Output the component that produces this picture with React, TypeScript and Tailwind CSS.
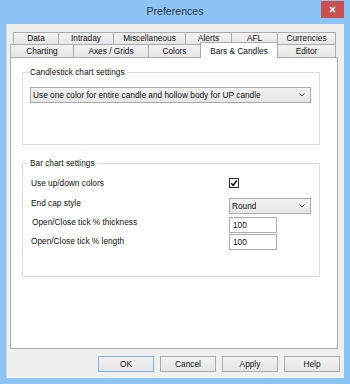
import React from "react";

const font = "font-['Liberation_Sans',Arial,sans-serif]";

function Chevron() {
	return (
		<svg width="6" height="4" viewBox="0 0 6 4" className="shrink-0">
			<polyline points="0.5,0.5 3,3 5.5,0.5" fill="none" stroke="#444" strokeWidth="1" />
		</svg>
	);
}

function Dropdown({ value, width }: { value: string; width: string }) {
	return (
		<div
			className={`${width} h-[16px] flex items-center justify-between pl-[2px] pr-[5px] border border-[#acacac] bg-gradient-to-b from-[#f2f2f2] to-[#e5e5e5] text-[8.3px] text-[#111]`}
		>
			<span className="truncate">{value}</span>
			<Chevron />
		</div>
	);
}

function Tab({
	label,
	width,
	className = "",
}: {
	label: string;
	width: string;
	className?: string;
}) {
	return (
		<div
			className={`${width} h-full flex items-center justify-center border-t border-l border-[#acacac] bg-gradient-to-b from-[#f2f2f2] to-[#e6e6e6] text-[8.3px] text-[#111] ${className}`}
		>
			{label}
		</div>
	);
}

function TextBox({ value }: { value: string }) {
	return (
		<div className="w-[48px] h-[16px] flex items-center pl-[3px] border border-[#abadb3] bg-white text-[8.3px] text-[#111]">
			{value}
		</div>
	);
}

function Button({ label, primary = false }: { label: string; primary?: boolean }) {
	return (
		<div
			className={`w-[56px] h-[16px] flex items-center justify-center border bg-gradient-to-b from-[#f2f2f2] to-[#e5e5e5] text-[8.3px] text-[#111] ${
				primary ? "border-[#7eb4ea]" : "border-[#acacac]"
			}`}
		>
			{label}
		</div>
	);
}

export default function App() {
	return (
		<div className={`w-[350px] h-[384px] bg-[#8ec4f5] flex flex-col ${font}`}>
			{/* Title bar */}
			<div className="relative h-[24px] flex items-center justify-center shrink-0">
				<span className="text-[10.6px] text-[#2b3440]">Preferences</span>
				<div className="absolute right-[6px] top-[1px] w-[23px] h-[17px] bg-[#c75050] flex items-center justify-center">
					<svg width="7" height="7" viewBox="0 0 7 7">
						<path d="M1 1 L6 6 M6 1 L1 6" stroke="#fff" strokeWidth="1.6" />
					</svg>
				</div>
			</div>

			{/* Client area */}
			<div className="ml-[6px] w-[338px] h-[354px] bg-[#f0f0f0] flex flex-col border-l border-[#d6d6d6]">
				{/* Tab row 1 */}
				<div className="mt-[8px] ml-[6px] h-[12px] flex">
					<Tab label="Data" width="w-[45px]" />
					<Tab label="Intraday" width="w-[55px]" />
					<Tab label="Miscellaneous" width="w-[72px]" />
					<Tab label="Alerts" width="w-[46px]" />
					<Tab label="AFL" width="w-[46px]" />
					<Tab label="Currencies" width="w-[59px]" className="border-r" />
				</div>
				{/* Tab row 2 */}
				<div className="ml-[3px] h-[13px] flex items-start">
					<Tab label="Charting" width="w-[63px]" />
					<Tab label="Axes / Grids" width="w-[75px]" />
					<Tab label="Colors" width="w-[52px]" />
					<div className="relative z-10 -mt-[2px] w-[78px] h-[16px] flex items-start justify-center pt-[2px] border-t border-l border-r border-[#acacac] bg-white text-[8.3px] text-[#111]">
						Bars &amp; Candles
					</div>
					<Tab label="Editor" width="w-[58px]" className="border-l-0 border-r" />
				</div>

				{/* Tab panel */}
				<div className="ml-[3px] w-[328px] h-[292px] border border-[#acacac] bg-white flex flex-col text-[8.3px] text-[#111]">
					<fieldset className="ml-[11px] mt-[9px] w-[298px] h-[78px] border border-[#dcdcdc] flex flex-col">
						<legend className="ml-[5px] px-[2px] leading-[10px]">Candlestick chart settings</legend>
						<div className="ml-[7px] mt-[10px]">
							<Dropdown
								value="Use one color for entire candle and hollow body for UP candle"
								width="w-[281px]"
							/>
						</div>
					</fieldset>

					<fieldset className="ml-[11px] mt-[13px] w-[298px] h-[119px] border border-[#dcdcdc] flex flex-col">
						<legend className="ml-[5px] px-[2px] leading-[10px]">Bar chart settings</legend>
						<div className="mt-[9px] h-[12px] flex items-center pl-[8px]">
							<span className="w-[198px]">Use up/down colors</span>
							<div className="w-[10px] h-[10px] border border-[#333] bg-white flex items-center justify-center">
								<svg width="8" height="8" viewBox="0 0 8 8">
									<path d="M1.2 4.2 L3.2 6.3 L6.8 1.5" fill="none" stroke="#111" strokeWidth="1.5" />
								</svg>
							</div>
						</div>
						<div className="mt-[9px] h-[16px] flex items-center pl-[8px]">
							<span className="w-[198px] -mt-[6px]">End cap style</span>
							<Dropdown value="Round" width="w-[82px]" />
						</div>
						<div className="mt-[3px] h-[16px] flex items-center pl-[9px]">
							<span className="w-[197px] -mt-[5px]">Open/Close tick % thickness</span>
							<TextBox value="100" />
						</div>
						<div className="mt-[1px] h-[16px] flex items-center pl-[8px]">
							<span className="w-[198px] -mt-[2px]">Open/Close tick % length</span>
							<TextBox value="100" />
						</div>
					</fieldset>
				</div>

				{/* Buttons */}
				<div className="mt-[7px] pr-[4px] flex justify-end gap-[6px]">
					<Button label="OK" primary />
					<Button label="Cancel" />
					<Button label="Apply" />
					<Button label="Help" />
				</div>
			</div>
		</div>
	);
}
